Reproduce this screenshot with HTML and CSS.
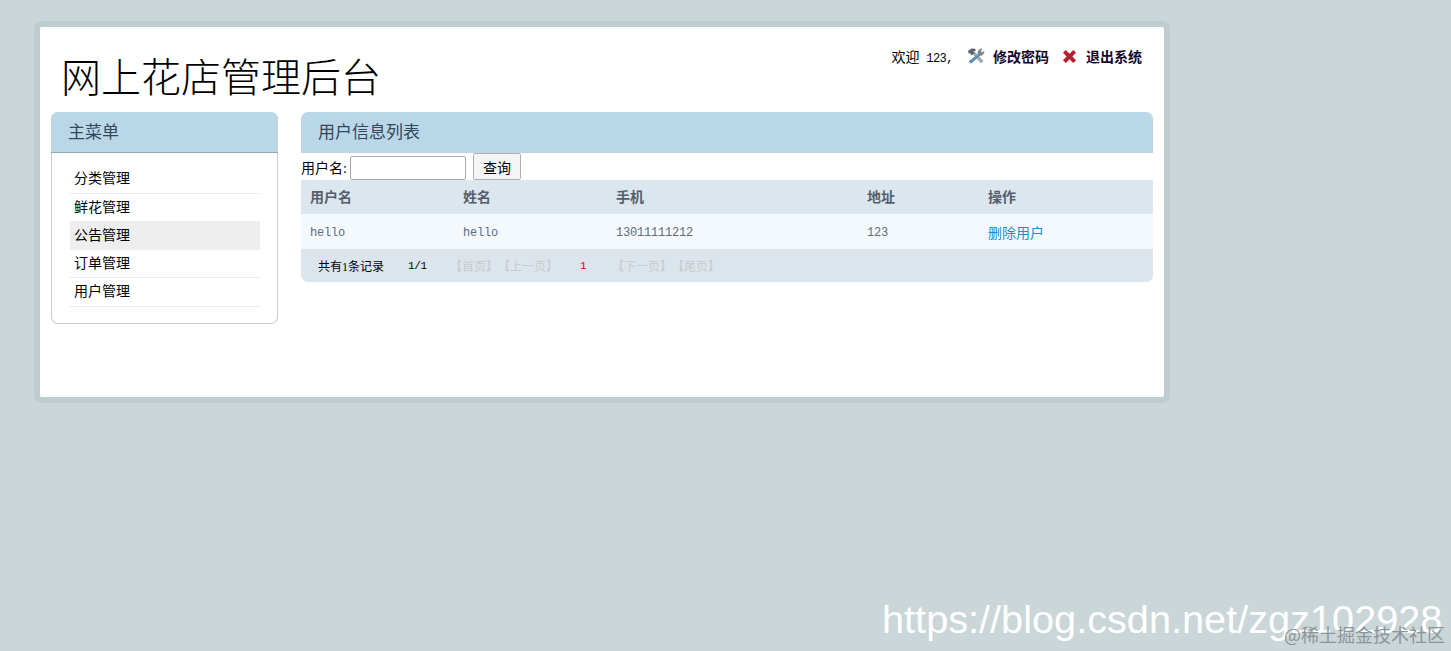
FILE: index.html
```html
<!DOCTYPE html>
<html lang="zh">
<head>
<meta charset="utf-8">
<title>网上花店管理后台</title>
<link rel="stylesheet" href="styles.css">
</head>
<body>
<div class="shell">
  <header class="top">
    <h1 class="brand">网上花店管理后台</h1>
    <div class="userbar">
      <span class="welcome">欢迎<span class="welcome-name"> 123,</span></span>
      <svg class="ico ico-tools" viewBox="0 0 18 16" width="18" height="16" aria-hidden="true">
        <path d="M5 5.5 L7.5 3.5 L16.5 13 L14 15.5 Z" fill="#a4abaf"/>
        <path d="M1 3 L4.5 0.5 L8 0.8 L9 2.5 L6.5 3.5 L7.5 5 L4.5 7.5 L3.5 5.5 L1.8 5.5 Z" fill="#5d666d"/>
        <path d="M10.8 6.6 L12.4 8.2 L4 15.8 L1.5 13.2 Z" fill="#5b8db5"/>
        <path d="M10.5 7 L10.8 3 L13.5 0.6 L15.5 0.8 L13.8 3 L15 4.5 L17.2 2.8 L17.3 5 L14.8 7.5 L12 8.2 Z" fill="#7d868c"/>
      </svg>
      <a class="toplink" href="#">修改密码</a>
      <svg class="ico ico-close" viewBox="0 0 16 16" width="15" height="15" aria-hidden="true">
        <path d="M1 4 L4 1 L8 5 L12 1 L15 4 L11 8 L15 12 L12 15 L8 11 L4 15 L1 12 L5 8 Z" fill="#b5222f"/>
      </svg>
      <a class="toplink" href="#">退出系统</a>
    </div>
  </header>
  <div class="columns">
    <aside class="side">
      <h2 class="panel-title side-title">主菜单</h2>
      <ul class="menu">
        <li class="menu-item"><a href="#">分类管理</a></li>
        <li class="menu-item"><a href="#">鲜花管理</a></li>
        <li class="menu-item is-active"><a href="#">公告管理</a></li>
        <li class="menu-item"><a href="#">订单管理</a></li>
        <li class="menu-item"><a href="#">用户管理</a></li>
      </ul>
    </aside>
    <main class="main">
      <h2 class="panel-title main-title">用户信息列表</h2>
      <form class="search">
        <label class="search-label" for="q">用户名:</label><input class="search-input" id="q" type="text"><button class="search-btn" type="button">查询</button>
      </form>
      <table class="grid">
        <colgroup>
          <col class="c1"><col class="c2"><col class="c3"><col class="c4"><col class="c5">
        </colgroup>
        <thead>
          <tr><th>用户名</th><th>姓名</th><th>手机</th><th>地址</th><th>操作</th></tr>
        </thead>
        <tbody>
          <tr><td>hello</td><td>hello</td><td>13011111212</td><td>123</td><td><a class="action" href="#">删除用户</a></td></tr>
        </tbody>
      </table>
      <div class="pager">
        <span class="p-total">共有1条记录</span>
        <span class="p-pages">1/1</span>
        <span class="p-off p-first">【首页】【上一页】</span>
        <span class="p-cur">1</span>
        <span class="p-off">【下一页】【尾页】</span>
      </div>
    </main>
  </div>
</div>
<div class="mark-a">https://blog.csdn.net/zgz102928</div>
<div class="mark-b">@稀土掘金技术社区</div>
</body>
</html>
```
FILE: styles.css
```css
* { box-sizing: border-box; }
html, body { height: 100%; }
body {
  margin: 0;
  background: #cbd6d9;
  font-family: "Liberation Serif", "Noto Sans CJK SC", serif;
  font-size: 14px;
  color: #000;
  overflow: hidden;
  text-spacing-trim: space-all;
}
.shell {
  width: 1136px;
  height: 382px;
  margin: 21px 0 0 34px;
  padding: 0 11px;
  background: #fff;
  border: 6px solid #bdcdd0;
  border-radius: 8px;
}
.top {
  height: 85px;
  display: flex;
  justify-content: space-between;
  align-items: flex-start;
}
.brand {
  margin: 27px 0 0 10px;
  font-size: 40px;
  line-height: 50px;
  font-weight: 300;
  font-family: "Liberation Serif", "Noto Sans CJK JP", serif;
}
.userbar {
  display: flex;
  align-items: center;
  margin: 19px 11px 0 0;
  height: 20px;
}
.welcome {
  font-size: 14px;
  margin-right: 14px;
}
.welcome-name {
  font-family: "Liberation Mono", monospace;
  font-size: 12px;
  letter-spacing: -0.5px;
  white-space: pre;
}
.ico { flex: none; }
.ico-tools { margin-right: 8px; }
.ico-close { margin: 0 9px 0 13px; }
.toplink {
  color: #14052e;
  font-weight: 700;
  font-size: 14px;
  text-decoration: none;
}
.columns {
  display: flex;
  align-items: flex-start;
  gap: 23px;
}
.panel-title {
  margin: 0;
  height: 41px;
  line-height: 41px;
  background: #bad7e7;
  color: #33475c;
  font-size: 17px;
  font-weight: 400;
  padding-left: 17px;
  border-radius: 7px 7px 0 0;
}
.side {
  width: 227px;
  height: 212px;
  border-radius: 7px;
  border: 1px solid #c9cdcf;
  border-top: 0;
}
.side-title {
  margin: 0 -1px;
  border-bottom: 1px solid #93a8b2;
}
.menu {
  list-style: none;
  margin: 0;
  padding: 12.3px 17px 0 17px;
}
.menu-item {
  height: 28.3px;
  line-height: 28px;
  border-bottom: 1px solid #eceeef;
  padding-left: 5px;
}
.menu-item a { color: #000; text-decoration: none; font-size: 14px; }
.is-active { background: #eeeeee; border-bottom-color: #eee; margin-left: 1px; padding-left: 4px; }
.main { width: 852px; }
.search {
  height: 27px;
  display: flex;
  align-items: center;
}
.search-label { font-size: 14px; margin-right: 3px; }
.search-input {
  width: 116px;
  height: 24px;
  margin: 2px 7px 0 0;
  padding: 0;
  border: 1px solid #a9a9a9;
  border-radius: 2px;
  background: #fff;
}
.search-btn {
  width: 48px;
  height: 27px;
  padding: 0;
  background: #f5f5f5;
  border: 1px solid #b0b0b0;
  border-radius: 2px;
  font-size: 14px;
  font-family: inherit;
  color: #000;
}
.grid {
  width: 852px;
  border-collapse: collapse;
  table-layout: fixed;
}
.c1, .c2 { width: 153px; }
.c3 { width: 251px; }
.c4 { width: 121px; }
.c5 { width: 174px; }
.grid th {
  height: 34px;
  background: #dce6ef;
  color: #555f6b;
  font-size: 14px;
  font-weight: 700;
  text-align: left;
  padding: 0 0 2px 9px;
}
.grid td {
  height: 35px;
  background: #f4f9fd;
  color: #5f6c7b;
  font-family: "Liberation Mono", "Noto Sans CJK SC", monospace;
  font-size: 12px;
  letter-spacing: -0.2px;
  padding: 3px 0 0 9px;
  border-bottom: 1px solid #dfe6ec;
}
.action {
  color: #1b8fc6;
  text-decoration: none;
  font-family: "Liberation Serif", "Noto Sans CJK SC", serif;
  font-size: 14px;
  letter-spacing: 0;
  vertical-align: 2px;
}
.pager {
  height: 32px;
  display: flex;
  align-items: center;
  padding-left: 17px;
  background: #dce5ec;
  border-radius: 0 0 7px 7px;
  font-size: 12px;
}
.p-total { width: 90px; }
.p-pages {
  width: 42px;
  font-family: "Liberation Mono", monospace;
  font-size: 11px;
  letter-spacing: -0.4px;
}
.p-off { color: #c8ccd0; font-size: 12px; white-space: nowrap; }
.p-first { width: 130px; }
.p-cur {
  color: #e60012;
  width: 32px;
  font-family: "Liberation Mono", monospace;
  font-size: 11px;
}
.mark-a {
  position: absolute;
  left: 882px;
  top: 594px;
  font-family: "Liberation Sans", sans-serif;
  font-size: 39.7px;
  line-height: 50px;
  color: #fff;
  white-space: nowrap;
}
.mark-b {
  position: absolute;
  right: 6px;
  top: 623px;
  font-family: "Noto Sans CJK SC", sans-serif;
  font-size: 18px;
  line-height: 22px;
  color: #8b9598;
  white-space: nowrap;
}
```
